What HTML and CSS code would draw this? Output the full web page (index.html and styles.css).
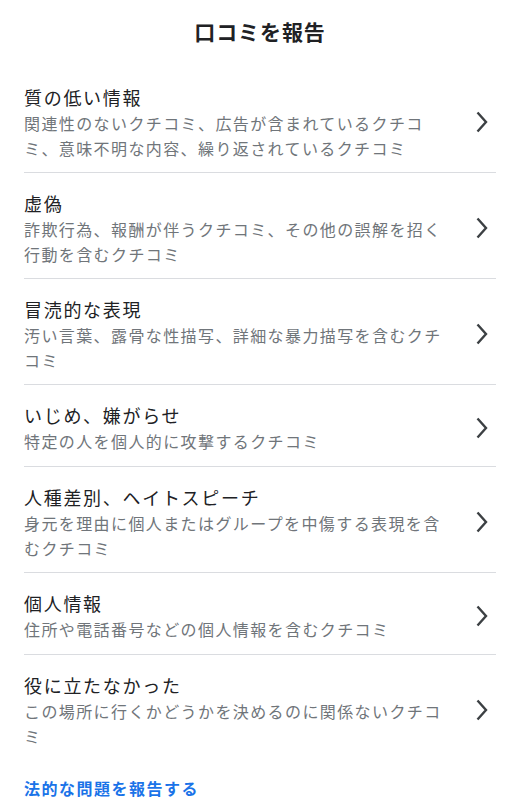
FILE: index.html
```html
<!DOCTYPE html>
<html lang="ja">
<head>
    <meta charset="UTF-8">
    <meta name="viewport" content="width=device-width, initial-scale=1.0">
    <title>口コミを報告</title>
    <link rel="stylesheet" href="styles.css">
</head>
<body>

    <h1 class="page-title">口コミを報告</h1>

    <ul class="report-list">
        <li class="report-item">
            <div class="report-text">
                <div class="report-name">質の低い情報</div>
                <div class="report-desc">関連性のないクチコミ、広告が含まれているクチコミ、意味不明な内容、繰り返されているクチコミ</div>
            </div>
            <svg class="chevron" width="12" height="22" viewBox="0 0 12 22"><polyline points="1.5,1.5 10,11 1.5,20.5"/></svg>
        </li>
        <li class="report-item">
            <div class="report-text">
                <div class="report-name">虚偽</div>
                <div class="report-desc">詐欺行為、報酬が伴うクチコミ、その他の誤解を招く行動を含むクチコミ</div>
            </div>
            <svg class="chevron" width="12" height="22" viewBox="0 0 12 22"><polyline points="1.5,1.5 10,11 1.5,20.5"/></svg>
        </li>
        <li class="report-item">
            <div class="report-text">
                <div class="report-name">冒涜的な表現</div>
                <div class="report-desc">汚い言葉、露骨な性描写、詳細な暴力描写を含むクチコミ</div>
            </div>
            <svg class="chevron" width="12" height="22" viewBox="0 0 12 22"><polyline points="1.5,1.5 10,11 1.5,20.5"/></svg>
        </li>
        <li class="report-item short">
            <div class="report-text">
                <div class="report-name">いじめ、嫌がらせ</div>
                <div class="report-desc">特定の人を個人的に攻撃するクチコミ</div>
            </div>
            <svg class="chevron" width="12" height="22" viewBox="0 0 12 22"><polyline points="1.5,1.5 10,11 1.5,20.5"/></svg>
        </li>
        <li class="report-item">
            <div class="report-text">
                <div class="report-name">人種差別、ヘイトスピーチ</div>
                <div class="report-desc">身元を理由に個人またはグループを中傷する表現を含むクチコミ</div>
            </div>
            <svg class="chevron" width="12" height="22" viewBox="0 0 12 22"><polyline points="1.5,1.5 10,11 1.5,20.5"/></svg>
        </li>
        <li class="report-item short">
            <div class="report-text">
                <div class="report-name">個人情報</div>
                <div class="report-desc">住所や電話番号などの個人情報を含むクチコミ</div>
            </div>
            <svg class="chevron" width="12" height="22" viewBox="0 0 12 22"><polyline points="1.5,1.5 10,11 1.5,20.5"/></svg>
        </li>
        <li class="report-item">
            <div class="report-text">
                <div class="report-name">役に立たなかった</div>
                <div class="report-desc">この場所に行くかどうかを決めるのに関係ないクチコミ</div>
            </div>
            <svg class="chevron" width="12" height="22" viewBox="0 0 12 22"><polyline points="1.5,1.5 10,11 1.5,20.5"/></svg>
        </li>
    </ul>

    <a class="legal-link" href="#">法的な問題を報告する</a>

</body>
</html>
```

FILE: styles.css
```css
* {
    margin: 0;
    padding: 0;
    box-sizing: border-box;
}

body {
    font-family: "Noto Sans CJK JP", "Noto Sans", sans-serif;
    background-color: #ffffff;
    color: #202124;
    padding: 16px 21px 0 24px;
}

.page-title {
    font-size: 21px;
    font-weight: bold;
    letter-spacing: 0.9px;
    line-height: 30px;
    text-align: center;
    margin-bottom: 21px;
}

.report-list {
    list-style-type: none;
}

.report-item {
    display: flex;
    align-items: center;
    padding: 16px 0 11px;
    border-bottom: 1px solid #dadce0;
}

.report-item.short {
    padding-bottom: 12px;
}

.report-item:last-child {
    border-bottom: none;
}

.report-text {
    width: 425px;
}

.report-name {
    font-size: 18px;
    letter-spacing: 1.7px;
    line-height: 28px;
    color: #202124;
}

.report-desc {
    font-size: 16px;
    letter-spacing: 1.4px;
    line-height: 25px;
    color: #70757a;
}

.chevron {
    margin-left: auto;
    margin-right: 8px;
    fill: none;
    stroke: #3c4043;
    stroke-width: 2.4;
}

.legal-link {
    display: block;
    margin-top: 16px;
    font-size: 16px;
    font-weight: bold;
    letter-spacing: 1.5px;
    line-height: 24px;
    color: #1a73e8;
    text-decoration: none;
}
```
